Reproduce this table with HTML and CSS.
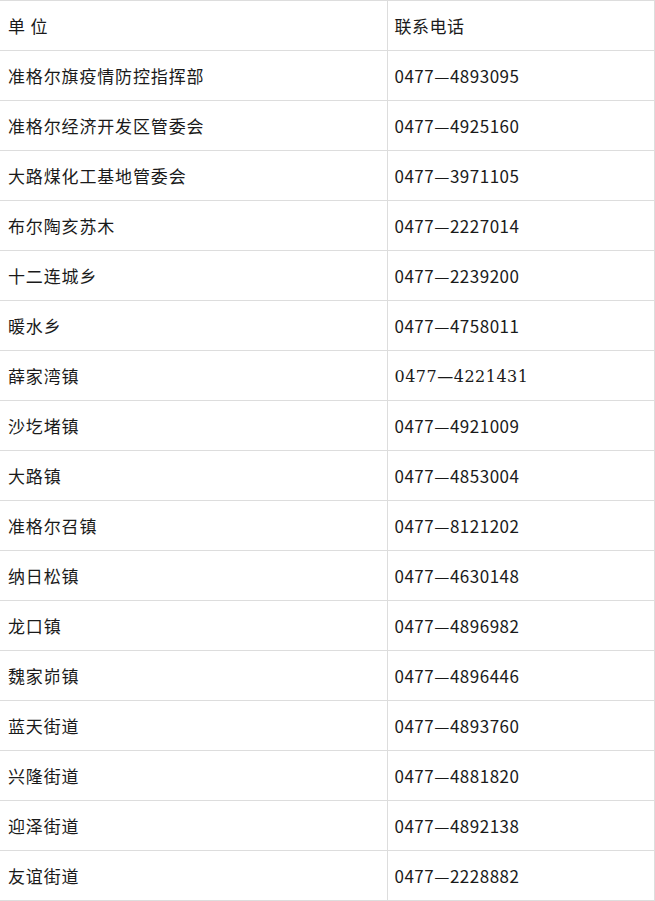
FILE: index.html
```html
<!DOCTYPE html>
<html lang="zh">
<head>
<meta charset="utf-8">
<title>联系电话</title>
<link rel="stylesheet" href="styles.css">
</head>
<body>
<table class="contacts">
  <colgroup><col class="c-unit"><col class="c-phone"></colgroup>
  <tr><td>单 位</td><td>联系电话</td></tr>
  <tr><td>准格尔旗疫情防控指挥部</td><td>0477—4893095</td></tr>
  <tr><td>准格尔经济开发区管委会</td><td>0477—4925160</td></tr>
  <tr><td>大路煤化工基地管委会</td><td>0477—3971105</td></tr>
  <tr><td>布尔陶亥苏木</td><td>0477—2227014</td></tr>
  <tr><td>十二连城乡</td><td>0477—2239200</td></tr>
  <tr><td>暖水乡</td><td>0477—4758011</td></tr>
  <tr><td>薛家湾镇</td><td><span class="alt">0477—4221431</span></td></tr>
  <tr><td>沙圪堵镇</td><td>0477—4921009</td></tr>
  <tr><td>大路镇</td><td>0477—4853004</td></tr>
  <tr><td>准格尔召镇</td><td>0477—8121202</td></tr>
  <tr><td>纳日松镇</td><td>0477—4630148</td></tr>
  <tr><td>龙口镇</td><td>0477—4896982</td></tr>
  <tr><td>魏家峁镇</td><td>0477—4896446</td></tr>
  <tr><td>蓝天街道</td><td>0477—4893760</td></tr>
  <tr><td>兴隆街道</td><td>0477—4881820</td></tr>
  <tr><td>迎泽街道</td><td>0477—4892138</td></tr>
  <tr><td>友谊街道</td><td>0477—2228882</td></tr>
</table>
</body>
</html>
```
FILE: styles.css
```css
html, body {
  margin: 0;
  padding: 0;
  background: #fff;
}
body {
  font-family: "Noto Sans CJK SC", "Noto Sans", sans-serif;
  font-size: 17px;
  color: #1a1a1a;
}
.contacts {
  border-collapse: collapse;
  width: 655px;
  table-layout: fixed;
}
.c-unit { width: 387px; }
.contacts td {
  height: 48px;
  padding: 1px 0 0 7px;
  border-top: 1px solid #ddd;
  border-bottom: 1px solid #ddd;
  vertical-align: middle;
  line-height: 20px;
  white-space: nowrap;
  letter-spacing: 0.5px;
}
.contacts td:first-child {
  padding-left: 8px;
  letter-spacing: 0.85px;
}
.contacts td + td {
  border-left: 1px solid #ddd;
  border-right: 1px solid #ddd;
}
.alt {
  font-family: "DejaVu Serif", serif;
  font-size: 16px;
}
```
